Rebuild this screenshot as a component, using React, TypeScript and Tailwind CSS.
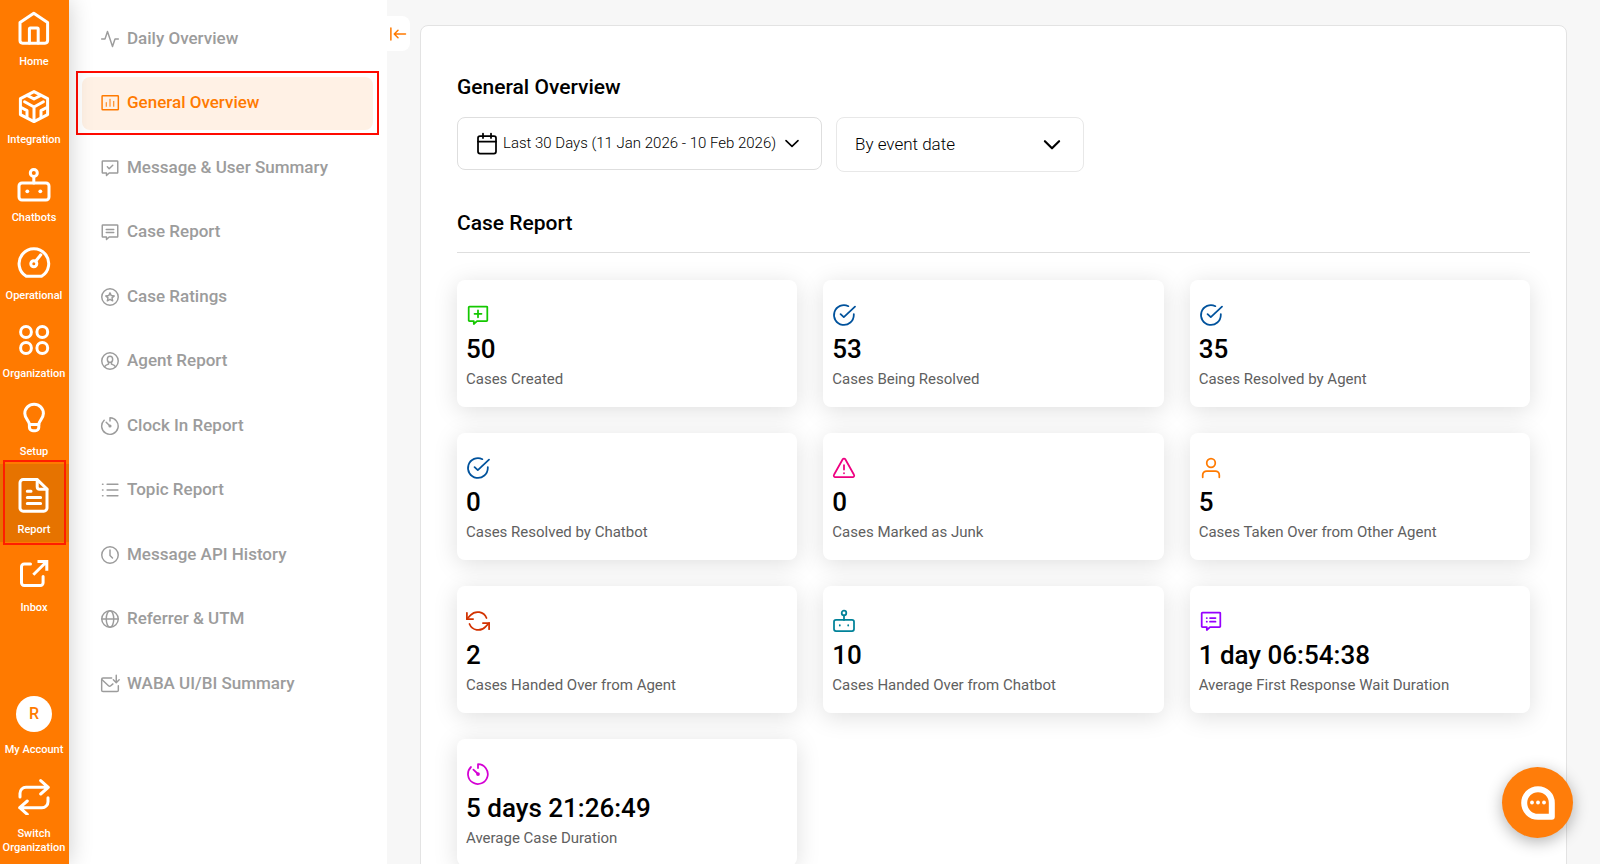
import type { ReactNode } from 'react'

type IconProps = { children: ReactNode; className?: string }

// Rail icons are drawn on a 36px grid, everything else on a 24px one
function RailIcon({ children }: { children: ReactNode }) {
  return (
    <svg
      viewBox="0 0 36 36"
      className="w-9 h-9 shrink-0"
      fill="none"
      stroke="currentColor"
      strokeWidth="3"
      strokeLinecap="round"
      strokeLinejoin="round"
      aria-hidden="true"
    >
      {children}
    </svg>
  )
}

function Icon({ children, className = 'w-5 h-5' }: IconProps) {
  return (
    <svg
      viewBox="0 0 24 24"
      className={`${className} shrink-0`}
      fill="none"
      stroke="currentColor"
      strokeWidth="1.75"
      strokeLinecap="round"
      strokeLinejoin="round"
      aria-hidden="true"
    >
      {children}
    </svg>
  )
}

const BUBBLE = 'M3.5 3.5h17a.8.8 0 0 1 .8.8v13a.8.8 0 0 1-.8.8H11l-3.2 2.9v-2.9H3.5a.8.8 0 0 1-.8-.8v-13a.8.8 0 0 1 .8-.8z'

const TIMER = (
  <>
    <path d="M12 6V2.2A9.9 9.9 0 1 1 5 5" />
    <path d="M7.4 7.6 12 12" />
    <circle cx="12" cy="12" r="1" fill="currentColor" />
  </>
)

const CHECK_CIRCLE = (
  <>
    <path d="M21.8 11v1a9.9 9.9 0 1 1-5.4-8.8" />
    <path d="m8.6 11.2 3.2 3L23 3.6" />
  </>
)

const RAIL = [
  {
    label: 'Home',
    icon: (
      <>
        <path d="M4 12.6 17.8 3.2l13.8 9.4v18a2.6 2.6 0 0 1-2.6 2.6H6.6A2.6 2.6 0 0 1 4 30.6z" />
        <path d="M13.4 33V19a1 1 0 0 1 1-1h6.8a1 1 0 0 1 1 1v14" />
      </>
    ),
  },
  {
    label: 'Integration',
    icon: (
      <>
        <path d="M18 3.6 31.6 10.6v16L18 33.6 4.4 26.6v-16z" />
        <path d="M8.6 13.8 18 19l9.4-5.2M18 19v14M11.2 7.4 18 11l6.8-3.6M11 29v-6.4l-6.2-3.4M25 29v-6.4l6.2-3.4" />
      </>
    ),
  },
  {
    label: 'Chatbots',
    icon: (
      <>
        <circle cx="17.8" cy="7" r="3.5" />
        <path d="M17.8 10.6V17" />
        <rect x="3" y="17" width="30" height="17" rx="3" />
        <circle cx="11.3" cy="25.3" r="1.9" fill="currentColor" stroke="none" />
        <circle cx="24.3" cy="25.3" r="1.9" fill="currentColor" stroke="none" />
      </>
    ),
  },
  {
    label: 'Operational',
    icon: (
      <>
        <path d="M10.2 32.2a14.8 14.8 0 1 1 15.4 0z" />
        <circle cx="17.8" cy="19.7" r="3" />
        <path d="m19.8 17 5-6.2" />
      </>
    ),
  },
  {
    label: 'Organization',
    icon: (
      <>
        <circle cx="10" cy="10" r="5.4" />
        <circle cx="26.3" cy="10" r="5.4" />
        <circle cx="10" cy="26" r="5.4" />
        <circle cx="26.3" cy="26" r="5.4" />
      </>
    ),
  },
  {
    label: 'Setup',
    icon: (
      <>
        <path d="M13.4 24.5c0-3.5-4.6-5.6-4.6-11a9.3 9.3 0 0 1 18.6 0c0 5.4-4.6 7.5-4.6 11z" />
        <path d="M13.4 24.5v2.8a3.5 3.5 0 0 0 3.5 3.5h2.4a3.5 3.5 0 0 0 3.5-3.5v-2.8" />
      </>
    ),
  },
  {
    label: 'Report',
    active: true,
    icon: (
      <>
        <path d="M7.2 1.6h14L31 11v19a3.2 3.2 0 0 1-3.2 3.2H7.2A3.2 3.2 0 0 1 4 30V4.8a3.2 3.2 0 0 1 3.2-3.2z" />
        <path d="M21.2 1.8v7a2.4 2.4 0 0 0 2.4 2.4H31M11.3 13.2H15M11.3 19.4h13.3M11.3 25.5h13.3" />
      </>
    ),
  },
  {
    label: 'Inbox',
    icon: (
      <>
        <path d="M14.5 8H8.2a2.7 2.7 0 0 0-2.7 2.7v16a2.7 2.7 0 0 0 2.7 2.7h16.2a2.7 2.7 0 0 0 2.7-2.7v-6.3" />
        <path d="M17.3 18.7 30.8 5.5M21.5 5.5h9.3v9.3" strokeLinecap="butt" strokeLinejoin="miter" />
      </>
    ),
  },
]

const MENU = [
  { label: 'Daily Overview', icon: <path d="M22 12h-4l-3 9L9 3l-3 9H2" /> },
  {
    label: 'General Overview',
    active: true,
    icon: (
      <>
        <rect x="2.5" y="3.2" width="19.5" height="17" rx=".8" />
        <path d="M7.5 11.5V16M12 7.5V16M16.5 10v6" strokeWidth="1.2" />
      </>
    ),
  },
  {
    label: 'Message & User Summary',
    icon: (
      <>
        <path d={BUBBLE} />
        <path d="m8.8 10.6 2.2 2.2 4.3-4.2" />
      </>
    ),
  },
  {
    label: 'Case Report',
    icon: (
      <>
        <path d={BUBBLE} />
        <path d="M7.5 9h9M7.5 12.7h9" />
      </>
    ),
  },
  {
    label: 'Case Ratings',
    icon: (
      <>
        <circle cx="12" cy="12" r="9.9" />
        <path d="m12 7 1.5 3.3 3.6.4-2.7 2.4.8 3.5-3.2-1.8-3.2 1.8.8-3.5-2.7-2.4 3.6-.4z" />
      </>
    ),
  },
  {
    label: 'Agent Report',
    icon: (
      <>
        <circle cx="12" cy="12" r="9.9" />
        <ellipse cx="12" cy="10" rx="3.2" ry="3.8" />
        <path d="M5.5 18.8c.8-1.7 2.3-2.3 4.7-3v-2M18.5 18.8c-.8-1.7-2.3-2.3-4.7-3v-2" />
      </>
    ),
  },
  { label: 'Clock In Report', icon: TIMER },
  {
    label: 'Topic Report',
    icon: <path d="M8.5 5.2h13M8.5 12h13M8.5 18.8h13M3 5.2h.6M3 12h.6M3 18.8h.6" />,
  },
  {
    label: 'Message API History',
    icon: (
      <>
        <circle cx="12" cy="12" r="9.9" />
        <path d="M12 6v6.5l3 3" />
      </>
    ),
  },
  {
    label: 'Referrer & UTM',
    icon: (
      <>
        <circle cx="12" cy="12" r="9.9" />
        <ellipse cx="12" cy="12" rx="4.5" ry="9.9" />
        <path d="M2.1 12h19.8" />
      </>
    ),
  },
  {
    label: 'WABA UI/BI Summary',
    icon: (
      <>
        <path d="M14 4.8H3.6A1.6 1.6 0 0 0 2 6.4v13A1.6 1.6 0 0 0 3.6 21h16.8a1.6 1.6 0 0 0 1.6-1.6V14" />
        <path d="m2.5 7 7.7 7.2a2 2 0 0 0 2.7 0l2.6-2.3M19.5 1.5v8.7M16 7l3.5 3.5L23 7" />
      </>
    ),
  },
]

const STATS = [
  {
    value: '50',
    label: 'Cases Created',
    color: 'text-[#14c800]',
    icon: (
      <>
        <path d={BUBBLE} />
        <path d="M12 7.3v7M8.5 10.8h7" />
      </>
    ),
  },
  { value: '53', label: 'Cases Being Resolved', color: 'text-[#00529c]', icon: CHECK_CIRCLE },
  { value: '35', label: 'Cases Resolved by Agent', color: 'text-[#00529c]', icon: CHECK_CIRCLE },
  { value: '0', label: 'Cases Resolved by Chatbot', color: 'text-[#00529c]', icon: CHECK_CIRCLE },
  {
    value: '0',
    label: 'Cases Marked as Junk',
    color: 'text-[#ee0080]',
    icon: (
      <>
        <path d="M10.7 3.3 2 18.8a1.5 1.5 0 0 0 1.3 2.3h17.4a1.5 1.5 0 0 0 1.3-2.3L13.3 3.3a1.5 1.5 0 0 0-2.6 0z" />
        <path d="M12 9v4.5M12 17v.3" />
      </>
    ),
  },
  {
    value: '5',
    label: 'Cases Taken Over from Other Agent',
    color: 'text-[#ff7a00]',
    icon: (
      <>
        <circle cx="12" cy="7" r="4.3" />
        <path d="M3.7 21.3V19a4 4 0 0 1 4-4h8.6a4 4 0 0 1 4 4v2.3" />
      </>
    ),
  },
  {
    value: '2',
    label: 'Cases Handed Over from Agent',
    color: 'text-[#d23200]',
    icon: (
      <>
        <path d="M.9 3.8V10h6.2M23.1 20.2V14h-6.2" />
        <path d="M20.5 9A9.5 9.5 0 0 0 4.6 6.2L.9 10M23.1 14l-3.7 3.8A9.5 9.5 0 0 1 3.5 15" />
      </>
    ),
  },
  {
    value: '10',
    label: 'Cases Handed Over from Chatbot',
    color: 'text-[#008299]',
    icon: (
      <>
        <circle cx="12" cy="4" r="2.3" />
        <path d="M12 6.3V11" />
        <rect x="2" y="10.8" width="20" height="11.2" rx="2" />
        <path d="M7.8 16v.6M16.2 16v.6" />
      </>
    ),
  },
  {
    value: '1 day 06:54:38',
    label: 'Average First Response Wait Duration',
    color: 'text-[#9600ff]',
    icon: (
      <>
        <path d={BUBBLE} />
        <path d="M7.7 9h.2M11 9h5.5M7.7 12.7h.2M11 12.7h5.5" />
      </>
    ),
  },
  { value: '5 days 21:26:49', label: 'Average Case Duration', color: 'text-[#d400d4]', icon: TIMER },
]

function Rail() {
  return (
    <nav className="relative z-10 w-[69px] shrink-0 flex flex-col bg-[#ff7a00] text-white shadow-[0_0_24px_rgba(0,0,0,0.2)]">
      <div className="-mt-1">
        {RAIL.map((item) => (
          <a
            key={item.label}
            href="#"
            className={`relative h-[78px] flex flex-col items-center pt-[14px] pr-px gap-[9px] text-[11px] leading-[14px] font-medium ${item.active ? 'bg-[#e67300]' : ''}`}
          >
            <RailIcon>{item.icon}</RailIcon>
            {item.label}
            {item.active && <span className="absolute -top-1 -bottom-[3px] left-[3px] right-[3px] border-2 border-[#ff1e00]" />}
          </a>
        ))}
      </div>

      <div className="mt-auto pb-[9px] pr-px flex flex-col items-center text-[11px] leading-[14px] font-medium text-center">
        <button className="flex flex-col items-center gap-[11px]">
          <span className="w-9 h-9 rounded-full bg-white text-[#ff7a00] text-base flex items-center justify-center">R</span>
          My Account
        </button>
        <button className="mt-[22px] flex flex-col items-center gap-3">
          <RailIcon>
            <path d="M4 18v-3.7a6 6 0 0 1 6-6h22.3M24.7 1.6l7.6 6.7-7.6 6.7" />
            <path d="M32 18.7v4a6 6 0 0 1-6 6H3.7M11.3 22l-7.6 6.7 7.6 6.7" />
          </RailIcon>
          <span>Switch Organization</span>
        </button>
      </div>
    </nav>
  )
}

function Menu() {
  return (
    <aside className="w-[318px] shrink-0 bg-white pt-3 pl-[13px] pr-[14px]">
      <div className="h-[698px] flex flex-col justify-between">
        {MENU.map((item) => (
          <a
            key={item.label}
            href="#"
            className={`relative h-[53px] flex items-center gap-[7px] px-[18px] rounded-lg text-[17px] font-medium ${item.active ? 'bg-[#fff1e5] text-[#ff7a00]' : 'text-[#9c9c9c]'}`}
          >
            <Icon>{item.icon}</Icon>
            {item.label}
            {item.active && <span className="absolute -inset-x-1.5 -top-1.5 -bottom-[5px] border-2 border-[#ff0a00]" />}
          </a>
        ))}
      </div>
    </aside>
  )
}

export default function App() {
  return (
    <div className="relative h-screen overflow-hidden flex bg-[#f7f7f7] text-black font-['Roboto','Liberation_Sans',sans-serif]">
      <Rail />
      <Menu />

      <button
        aria-label="Collapse menu"
        className="mt-4 w-[23px] h-[35px] pr-px shrink-0 rounded-r-lg bg-white text-[#ff7a00] flex items-center justify-center"
      >
        <Icon className="w-[18px] h-[18px]">
          <path d="M2.5 4v16M22 12H7M12 7l-5 5 5 5" strokeWidth="2" />
        </Icon>
      </button>

      <main className="flex-1 min-w-0 pt-[25px] pl-2.5 pr-[33px]">
        <div className="min-h-screen rounded-lg border border-[#e3e3e3] bg-white px-9 pt-[45px]">
          <h1 className="text-[21px] leading-8 font-medium">General Overview</h1>

          <div className="mt-[14px] flex items-start gap-3.5">
            <button className="h-[53px] w-[365px] rounded-lg border border-[#dedede] pl-[17px] flex items-center gap-1 text-[15px] font-light">
              <Icon className="w-6 h-6">
                <rect x="3" y="4" width="18" height="17.5" rx="2" />
                <path d="M3 9.5h18M8 1.5V6M16 1.5V6" />
              </Icon>
              <span className="whitespace-nowrap">Last 30 Days (11 Jan 2026 - 10 Feb 2026)</span>
              <Icon className="ml-1 w-4 h-4">
                <path d="m3 7 9 8.5L21 7" strokeWidth="2.4" />
              </Icon>
            </button>
            <div className="relative">
              <select
                aria-label="Date type"
                className="appearance-none h-[55px] w-[248px] rounded-lg border border-[#e8e8e8] bg-white pl-[18px] text-[17px] font-light"
              >
                <option>By event date</option>
              </select>
              <Icon className="w-5 h-5 absolute right-[22px] top-[18px] pointer-events-none">
                <path d="m3.5 7.5 8.5 8.5 8.5-8.5" strokeWidth="2.6" />
              </Icon>
            </div>
          </div>

          <h2 className="mt-[35px] pb-[13px] border-b border-[#dedede] text-[21px] leading-8 font-medium">Case Report</h2>

          <div className="mt-[27px] grid grid-cols-3 gap-[26px]">
            {STATS.map((stat) => (
              <div
                key={stat.label}
                className="h-[127px] rounded-lg bg-white px-[9px] pt-[23px] shadow-[0_4px_24px_rgba(0,0,0,0.13)]"
              >
                <div className={stat.color}>
                  <Icon className="w-6 h-6">{stat.icon}</Icon>
                </div>
                <div className="mt-1.5 text-[26px] leading-8 font-medium">{stat.value}</div>
                <div className="mt-1 text-[15px] leading-5 text-[#606060]">{stat.label}</div>
              </div>
            ))}
          </div>
        </div>
      </main>

      <button
        aria-label="Open chat"
        className="absolute right-[27px] bottom-[26px] z-20 w-[71px] h-[71px] rounded-full bg-[#ff7d0a] text-white flex items-center justify-center shadow-[0_4px_16px_rgba(0,0,0,0.3)]"
      >
        <svg viewBox="0 0 36 36" className="w-9 h-9" fill="none" aria-hidden="true">
          <path d="M18 4.2a13.8 13.8 0 0 0 0 27.6h13.8V18A13.8 13.8 0 0 0 18 4.2z" stroke="currentColor" strokeWidth="6" strokeLinejoin="round" />
          <circle cx="12" cy="17.5" r="1.9" fill="currentColor" />
          <circle cx="18" cy="17.5" r="1.9" fill="currentColor" />
          <circle cx="24" cy="17.5" r="1.9" fill="currentColor" />
        </svg>
      </button>
    </div>
  )
}
